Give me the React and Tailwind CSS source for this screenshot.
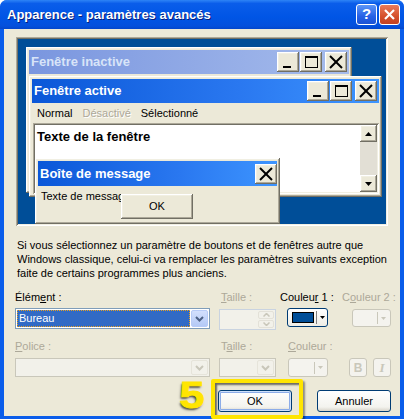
import React from "react";

const raised =
  "shadow-[inset_-1px_-1px_#716F64,inset_1px_1px_#FFFFFF,inset_-2px_-2px_#ACA899,inset_2px_2px_#F1EFE2]";
const sunken =
  "shadow-[inset_1px_1px_#ACA899,inset_-1px_-1px_#FFFFFF,inset_2px_2px_#716F64,inset_-2px_-2px_#F1EFE2]";
const activeBar = "bg-[linear-gradient(to_right,#0A57D8,#2A78F0_60%,#3D95FF)]";
const inactiveBar = "bg-[linear-gradient(to_right,#7A96DF,#A6BCEC)]";

function CapBtn({ kind, className = "" }) {
  return (
    <div className={`w-[22px] h-[20px] bg-[#ECE9D8] ${raised} ${className}`}>
      <svg width="22" height="20" viewBox="0 0 22 20">
        {kind === "min" && <rect x="6" y="14" width="8" height="2" fill="#000" />}
        {kind === "max" && (
          <g fill="none" stroke="#000">
            <rect x="5.5" y="4.5" width="12" height="11" />
            <line x1="5" y1="5.5" x2="18" y2="5.5" />
          </g>
        )}
        {kind === "close" && (
          <g stroke="#000" strokeWidth="2">
            <line x1="5" y1="4" x2="17" y2="16" />
            <line x1="17" y1="4" x2="5" y2="16" />
          </g>
        )}
      </svg>
    </div>
  );
}

function ScrollBtn({ up }) {
  return (
    <div className={`h-[17px] bg-[#ECE9D8] ${raised} flex items-center justify-center`}>
      <svg width="7" height="4" viewBox="0 0 7 4">
        {up ? <polygon points="3.5,0 7,4 0,4" fill="#000" /> : <polygon points="0,0 7,0 3.5,4" fill="#000" />}
      </svg>
    </div>
  );
}

function ComboArrow({ disabled }) {
  return (
    <div
      className={`w-[17px] h-full rounded-[2px] border flex items-center justify-center ${
        disabled
          ? "border-[#E6E4DA] bg-[#F2F1EA]"
          : "border-[#B7CBF7] bg-[linear-gradient(to_bottom,#D3E0FD,#B4C9F6)]"
      }`}
    >
      <svg width="9" height="6" viewBox="0 0 9 6">
        <polyline
          points="1,1 4.5,4.5 8,1"
          fill="none"
          stroke={disabled ? "#C9C7BA" : "#4D6185"}
          strokeWidth="2"
        />
      </svg>
    </div>
  );
}

function Label({ children, disabled, className = "" }) {
  return (
    <div className={`h-[14px] leading-[14px] whitespace-nowrap ${disabled ? "text-[#ACA899]" : "text-black"} ${className}`}>
      {children}
    </div>
  );
}

function XpButton({ children, isDefault }) {
  return (
    <div
      className={`w-[74px] h-[22px] rounded-[3px] border border-[#003C74] bg-[linear-gradient(to_bottom,#FFFFFF,#F3F3EE_80%,#D8D4CA)] flex items-center justify-center text-black ${
        isDefault ? "shadow-[inset_0_0_0_1px_#CEE0FA,inset_0_0_0_2px_#8CACE8]" : ""
      }`}
    >
      {children}
    </div>
  );
}

export default function App() {
  return (
    <div className="w-[404px] h-[419px] bg-[#0A5DEA] rounded-t-[7px] overflow-hidden flex flex-col font-['Liberation_Sans',Arial,sans-serif] text-[11px]">
      {/* title bar */}
      <div className="h-[29px] shrink-0 flex items-center pl-[7px] pr-[4px] bg-[linear-gradient(to_bottom,#2E84F6_0%,#0A5DEA_12%,#0055E5_60%,#0450DC_90%,#0346CC_100%)]">
        <div className="flex-1 text-white font-bold text-[13px] [text-shadow:1px_1px_#0A1E7A]">
          Apparence - paramètres avancés
        </div>
        <div className="w-[21px] h-[21px] rounded-[3px] border border-white bg-[linear-gradient(to_bottom,#5C96F7,#2661E6_60%,#1A52D4)] flex items-center justify-center text-white font-bold text-[15px]">
          ?
        </div>
        <div className="ml-[2px] w-[21px] h-[21px] rounded-[3px] border border-white bg-[linear-gradient(to_bottom,#E97B5A,#D5502B_60%,#C24022)] flex items-center justify-center">
          <svg width="11" height="11" viewBox="0 0 11 11">
            <g stroke="#fff" strokeWidth="2.2">
              <line x1="1" y1="1" x2="10" y2="10" />
              <line x1="10" y1="1" x2="1" y2="10" />
            </g>
          </svg>
        </div>
      </div>

      {/* body */}
      <div className="relative flex-1 mx-[4px] mb-[3px] bg-[#ECE9D8] flex flex-col">
        {/* preview */}
        <div className="relative ml-[12px] mt-[8px] w-[372px] h-[189px] bg-[#004E98] shadow-[inset_1px_1px_#ACA899,inset_-1px_-1px_#FFFFFF,inset_2px_2px_#716F64,inset_-2px_-2px_#F1EFE2]">
          {/* inactive window */}
          <div className={`absolute left-[10px] top-[10px] w-[326px] h-[146px] bg-[#ECE9D8] ${raised} p-[3px]`}>
            <div className={`h-[24px] ${inactiveBar} flex items-center pl-[2px] pr-[2px]`}>
              <div className="flex-1 text-[#D8E4F8] font-bold text-[13px]">Fenêtre inactive</div>
              <CapBtn kind="min" />
              <CapBtn kind="max" className="ml-[1px]" />
              <CapBtn kind="close" className="ml-[3px]" />
            </div>
          </div>

          {/* active window */}
          <div className={`absolute left-[13px] top-[39px] w-[353px] h-[121px] bg-[#ECE9D8] ${raised} p-[3px] flex flex-col`}>
            <div className={`h-[24px] shrink-0 ${activeBar} flex items-center pl-[2px] pr-[2px]`}>
              <div className="flex-1 text-white font-bold text-[13px]">Fenêtre active</div>
              <CapBtn kind="min" />
              <CapBtn kind="max" className="ml-[1px]" />
              <CapBtn kind="close" className="ml-[3px]" />
            </div>
            <div className="h-[20px] shrink-0 flex items-center pl-[5px] text-black">
              <span>Normal</span>
              <span className="ml-[10px] text-[#ACA899] [text-shadow:1px_1px_#FFFFFF]">Désactivé</span>
              <span className="ml-[10px]">Sélectionné</span>
            </div>
            <div className={`flex-1 ml-[1px] bg-white ${sunken} p-[2px] flex`}>
              <div className="flex-1 pl-[2px] pt-[2px] font-bold text-[13px] text-black">Texte de la fenêtre</div>
              <div className="w-[17px] flex flex-col bg-[#E2DFD5]">
                <ScrollBtn up />
                <div className="flex-1" />
                <ScrollBtn />
              </div>
            </div>
          </div>

          {/* message box */}
          <div className={`absolute left-[19px] top-[121px] w-[245px] h-[66px] bg-[#ECE9D8] ${raised} p-[3px]`}>
            <div className={`h-[25px] ${activeBar} flex items-center pl-[2px] pr-[0px]`}>
              <div className="flex-1 text-white font-bold text-[13px]">Boîte de message</div>
              <CapBtn kind="close" />
            </div>
            <div className="pl-[3px] pt-[3px] leading-[14px] text-black whitespace-nowrap">Texte de message</div>
            <div className={`absolute left-[86px] top-[36px] w-[72px] h-[25px] bg-[#ECE9D8] ${raised} flex items-center justify-center text-black`}>
              OK
            </div>
          </div>
        </div>

        {/* description */}
        <div className="mt-[12px] ml-[13px] leading-[14px] text-black whitespace-nowrap">
          Si vous sélectionnez un paramètre de boutons et de fenêtres autre que
          <br />
          Windows classique, celui-ci va remplacer les paramètres suivants exception
          <br />
          faite de certains programmes plus anciens.
        </div>

        {/* row 1 */}
        <div className="mt-[10px] flex">
          <div className="ml-[11px] w-[195px]">
            <Label>
              Élém<span className="underline">e</span>nt :
            </Label>
            <div className="mt-[4px] h-[21px] border border-[#7F9DB9] bg-white flex p-[1px]">
              <div className="flex-1 bg-[#316AC5] outline outline-1 outline-dotted outline-[#E8A020] -outline-offset-1 text-white pl-[2px] leading-[17px]">
                Bureau
              </div>
              <div className="ml-[1px] h-full">
                <ComboArrow />
              </div>
            </div>
          </div>
          <div className="ml-[9px] w-[57px]">
            <Label disabled className="pl-[2px]">
              <span className="underline">T</span>aille :
            </Label>
            <div className="mt-[5px] h-[21px] border border-[#C9D3E0] bg-[#F2F1EA] flex justify-end p-[1px]">
              <div className="w-[16px] flex flex-col gap-[1px]">
                <div className="flex-1 rounded-[2px] border border-[#E3E1D8] flex items-center justify-center">
                  <svg width="7" height="4" viewBox="0 0 7 4"><polyline points="0.5,3.5 3.5,0.5 6.5,3.5" fill="none" stroke="#C9C7BA" strokeWidth="1.5" /></svg>
                </div>
                <div className="flex-1 rounded-[2px] border border-[#E3E1D8] flex items-center justify-center">
                  <svg width="7" height="4" viewBox="0 0 7 4"><polyline points="0.5,0.5 3.5,3.5 6.5,0.5" fill="none" stroke="#C9C7BA" strokeWidth="1.5" /></svg>
                </div>
              </div>
            </div>
          </div>
          <div className="ml-[4px] w-[58px]">
            <Label>
              Couleu<span className="underline">r</span> 1 :
            </Label>
            <div className="mt-[4px] ml-[7px] w-[41px] h-[19px] rounded-[3px] border border-[#003C74] bg-[linear-gradient(to_bottom,#FFFFFF,#EEEDE5)] flex items-center pl-[4px]">
              <div className="w-[22px] h-[11px] bg-[#004E98] border border-black" />
              <div className="ml-[2px] w-[1px] h-[13px] bg-[#808080]" />
              <svg className="ml-[3px]" width="5" height="3" viewBox="0 0 5 3"><polygon points="0,0 5,0 2.5,3" fill="#000" /></svg>
            </div>
          </div>
          <div className="ml-[4px] w-[54px]">
            <Label disabled>
              C<span className="underline">o</span>uleur 2 :
            </Label>
            <div className="mt-[5px] ml-[10px] w-[39px] h-[18px] rounded-[3px] border border-[#C9C7BA] bg-[#F4F3EE] flex items-center justify-end pr-[4px]">
              <div className="w-[1px] h-[12px] bg-[#C9C7BA]" />
              <svg className="ml-[3px]" width="5" height="3" viewBox="0 0 5 3"><polygon points="0,0 5,0 2.5,3" fill="#C9C7BA" /></svg>
            </div>
          </div>
        </div>

        {/* row 2 */}
        <div className="mt-[9px] flex">
          <div className="ml-[11px] w-[195px]">
            <Label disabled>
              <span className="underline">P</span>olice :
            </Label>
            <div className="mt-[5px] h-[19px] border border-[#C9C7BA] bg-[#F2F1EA] flex justify-end p-[1px]">
              <ComboArrow disabled />
            </div>
          </div>
          <div className="ml-[9px] w-[57px]">
            <Label disabled className="pl-[2px]">
              T<span className="underline">a</span>ille :
            </Label>
            <div className="mt-[5px] h-[19px] border border-[#C9C7BA] bg-[#F2F1EA] flex justify-end p-[1px]">
              <ComboArrow disabled />
            </div>
          </div>
          <div className="ml-[12px] w-[40px]">
            <Label disabled>
              <span className="underline">C</span>ouleur :
            </Label>
            <div className="mt-[5px] w-[40px] h-[19px] rounded-[3px] border border-[#C9C7BA] bg-[#F4F3EE] flex items-center justify-end pr-[4px]">
              <div className="w-[1px] h-[12px] bg-[#C9C7BA]" />
              <svg className="ml-[3px]" width="5" height="3" viewBox="0 0 5 3"><polygon points="0,0 5,0 2.5,3" fill="#C9C7BA" /></svg>
            </div>
          </div>
          <div className="ml-[21px] flex items-end gap-[6px]">
            <div className="w-[18px] h-[19px] rounded-[3px] border border-[#C9C7BA] bg-[#F4F3EE] flex items-center justify-center font-bold text-[12px] text-[#C9C7BA]">
              B
            </div>
            <div className="w-[18px] h-[19px] rounded-[3px] border border-[#C9C7BA] bg-[#F4F3EE] flex items-center justify-center italic font-bold font-['Liberation_Serif',serif] text-[13px] text-[#C9C7BA]">
              I
            </div>
          </div>
        </div>

        {/* buttons */}
        <div className="mt-[13px] flex justify-end pr-[9px] gap-[25px]">
          <XpButton isDefault>OK</XpButton>
          <XpButton>Annuler</XpButton>
        </div>

        {/* annotation */}
        <div className="absolute left-[207px] top-[350px] w-[92px] h-[40px] border-[4px] border-[#FFE500] rounded-[2px] shadow-[inset_2px_2px_2px_rgba(0,0,0,0.55),2px_2px_2px_rgba(0,0,0,0.4)] pointer-events-none" />
        <div className="absolute left-[178px] top-[349px] w-[20px] text-[36px] leading-[36px] font-bold text-[#FFE500] scale-x-125 [-webkit-text-stroke:1px_#FFE500] [text-shadow:-1px_2px_2px_rgba(0,0,0,0.7)] pointer-events-none">
          5
        </div>
      </div>
    </div>
  );
}
